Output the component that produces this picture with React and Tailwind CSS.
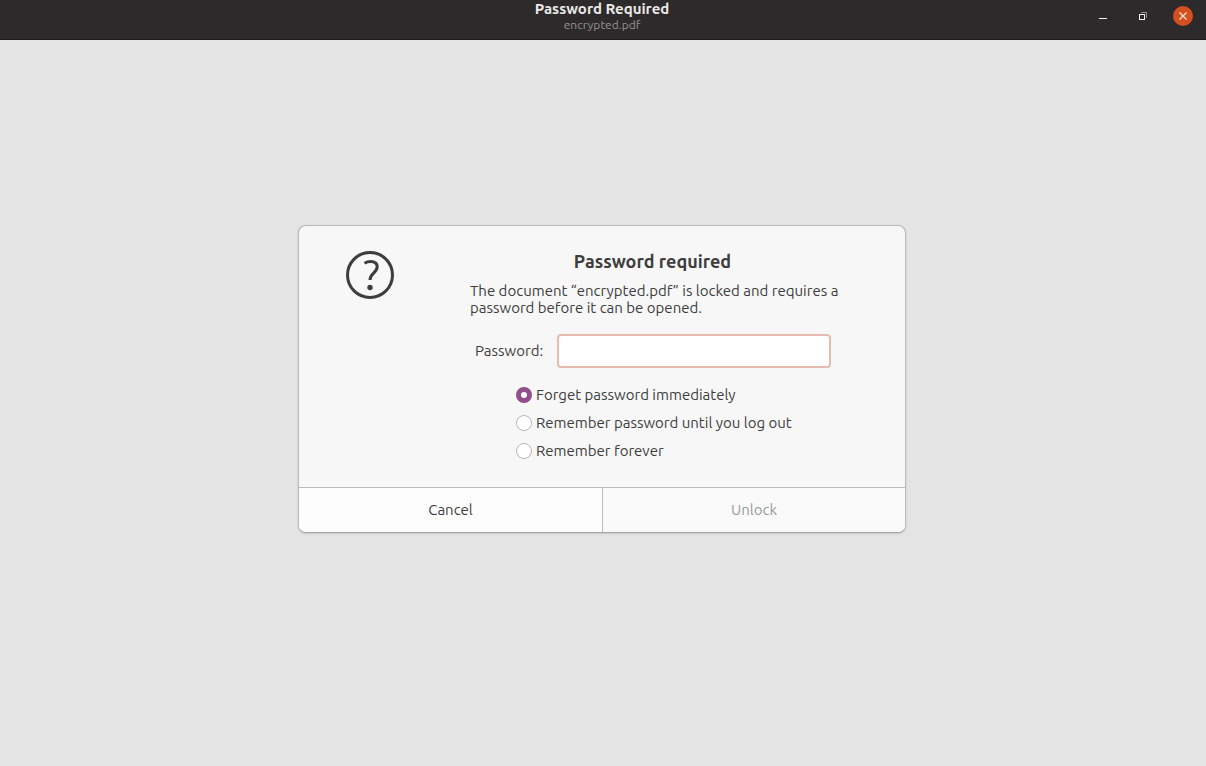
import { useState } from 'react'

const REMEMBER_OPTIONS = [
  { value: 'forget', label: 'Forget password immediately' },
  { value: 'session', label: 'Remember password until you log out' },
  { value: 'forever', label: 'Remember forever' },
]

function TitleBar() {
  return (
    <header className="grid h-10 grid-cols-[1fr_auto_1fr] border-b border-[#1c1a1a] bg-[#2d2a2b]">
      <div />
      <div className="flex flex-col items-center pr-0.5 pt-px">
        <h1 className="text-[15px] leading-4 font-bold text-[#ebe9e8]">Password Required</h1>
        <p className="text-[12px] leading-4 text-[#969493]">encrypted.pdf</p>
      </div>
      <div className="flex items-start justify-end gap-5 pt-1.5 pr-[13px]">
        <button type="button" aria-label="Minimize" className="size-5">
          <svg viewBox="0 0 20 20" className="size-5">
            <path d="M6 12h8v1H6z" fill="#f2f0ef" />
          </svg>
        </button>
        <button type="button" aria-label="Restore" className="size-5">
          <svg viewBox="0 0 20 20" className="size-5">
            <path d="M8 6h6v6h-1V7H8z" fill="#8f8d8c" />
            <path d="M6 8h6v6H6zM7 9v4h4V9z" fill="#f2f0ef" fillRule="evenodd" />
          </svg>
        </button>
        <button type="button" aria-label="Close" className="size-5 rounded-full bg-[#d4501f]">
          <svg viewBox="0 0 20 20" className="size-5">
            <path d="M6.5 6.5l7 7M13.5 6.5l-7 7" stroke="#fbe3da" strokeWidth="1.3" />
          </svg>
        </button>
      </div>
    </header>
  )
}

function QuestionIcon() {
  return (
    <svg viewBox="0 0 48 48" className="size-12 shrink-0" fill="none" aria-hidden="true">
      <circle cx="24" cy="24" r="22.5" stroke="#3d3d3d" strokeWidth="3" />
      <path
        d="M18.5 12.2C20.5 11 22.3 10.5 24.5 10.5c4.2 0 6.7 2 6.7 5.3 0 2.9-1.6 4.6-3.8 6.6-2.3 2.1-3.4 3.7-3.4 6.6"
        stroke="#3d3d3d"
        strokeWidth="3"
      />
      <circle cx="24" cy="36.5" r="2.7" fill="#3d3d3d" />
    </svg>
  )
}

function PasswordDialog() {
  const [password, setPassword] = useState('')
  const [remember, setRemember] = useState('forget')

  return (
    <form
      className="w-full max-w-[608px] overflow-hidden rounded-lg border border-[#b9b9b9] border-b-[#a3a3a3] bg-[#f7f7f7] shadow-sm"
      onSubmit={(e) => e.preventDefault()}
    >
      <div className="flex gap-[71px] pt-[25px] pr-[65px] pb-[26px] pl-[47px]">
        <QuestionIcon />
        <div className="flex-1">
          <h2 className="text-center text-[18px] leading-5 font-bold">Password required</h2>
          <p className="mt-[11px] pl-[5px] text-[15px] leading-[17px]">
            The document “encrypted.pdf” is locked and requires a password before it can be opened.
          </p>
          <div className="mt-[18px] flex items-center gap-3.5 pr-[9px] pl-[10px]">
            <label htmlFor="password" className="text-[15px]">
              Password:
            </label>
            <input
              id="password"
              type="password"
              value={password}
              onChange={(e) => setPassword(e.target.value)}
              className="h-[34px] min-w-0 flex-1 rounded-sm border-2 border-[#e6bcb1] bg-white px-2 text-[15px] outline-none"
            />
          </div>
          <div className="mt-[17px] flex flex-col gap-2 pl-[51px]">
            {REMEMBER_OPTIONS.map((option) => (
              <label key={option.value} className="flex h-5 items-center gap-1 text-[15px] whitespace-nowrap">
                <input
                  type="radio"
                  name="remember"
                  value={option.value}
                  checked={remember === option.value}
                  onChange={() => setRemember(option.value)}
                  className="size-4 shrink-0 appearance-none rounded-full border border-[#b8b8b8] bg-white checked:border-[5px] checked:border-[#924d8b]"
                />
                {option.label}
              </label>
            ))}
          </div>
        </div>
      </div>
      <div className="grid h-[45px] grid-cols-2 border-t border-[#bdbdbd] text-[15px]">
        <button type="button" className="bg-[#fdfdfd]">
          Cancel
        </button>
        <button type="submit" disabled={!password} className="border-l border-[#bdbdbd] bg-[#fafafa] disabled:text-[#9b9b9b]">
          Unlock
        </button>
      </div>
    </form>
  )
}

function App() {
  return (
    <div className="flex min-h-screen flex-col bg-[#e4e4e4] font-[Ubuntu,'Noto_Sans',sans-serif] text-[#3d3d3d]">
      <TitleBar />
      <main className="flex flex-1 items-center justify-center pr-0.5 pb-12">
        <PasswordDialog />
      </main>
    </div>
  )
}

export default App
